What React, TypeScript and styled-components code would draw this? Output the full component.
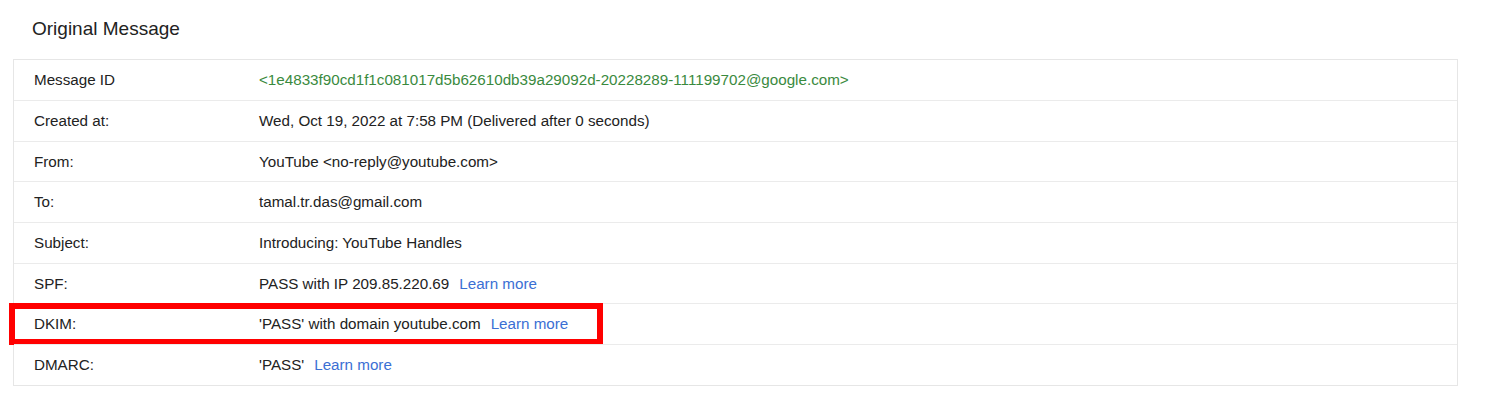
import React from "react";
import styled, { createGlobalStyle } from "styled-components";

const Global = createGlobalStyle`
  html, body { margin: 0; padding: 0; background: #fff; }
  body { font-family: Arial, "Liberation Sans", sans-serif; color: #222; }
`;

const Page = styled.div`
  width: 1500px;
  height: 412px;
  padding: 17px 0 0 13px;
  box-sizing: border-box;
`;

const Title = styled.h2`
  margin: 0 0 0 19px;
  font-size: 19px;
  font-weight: 400;
  line-height: 24px;
  color: #222;
`;

const Table = styled.div`
  margin-top: 18px;
  width: 1445px;
  border: 1px solid #e6e6e6;
  box-sizing: border-box;
`;

const Row = styled.div`
  position: relative;
  display: flex;
  align-items: center;
  height: 40.7px;
  padding-bottom: 1px;
  box-sizing: border-box;
  font-size: 15.2px;
  border-top: 1px solid #ebebeb;
  &:first-child { border-top: none; height: 40px; }
`;

const Label = styled.div`
  width: 225px;
  padding-left: 20px;
  flex: none;
`;

const Value = styled.div<{ $tone?: "green" }>`
  color: ${(p) => (p.$tone === "green" ? "#3a8a3e" : "#222")};
  white-space: pre;
`;

const Link = styled.a`
  color: #3b6fd4;
  text-decoration: none;
  margin-left: 10px;
  cursor: pointer;
`;

const Highlight = styled.div`
  position: absolute;
  left: -5px;
  top: -1px;
  width: 594px;
  height: 42px;
  border: 6.5px solid #ff0000;
  box-sizing: border-box;
  pointer-events: none;
`;

type Item = { label: string; value: string; link?: boolean; green?: boolean; mark?: boolean };

const items: Item[] = [
  { label: "Message ID", value: "<1e4833f90cd1f1c081017d5b62610db39a29092d-20228289-111199702@google.com>", green: true },
  { label: "Created at:", value: "Wed, Oct 19, 2022 at 7:58 PM (Delivered after 0 seconds)" },
  { label: "From:", value: "YouTube <no-reply@youtube.com>" },
  { label: "To:", value: "tamal.tr.das@gmail.com" },
  { label: "Subject:", value: "Introducing: YouTube Handles" },
  { label: "SPF:", value: "PASS with IP 209.85.220.69", link: true },
  { label: "DKIM:", value: "'PASS' with domain youtube.com", link: true, mark: true },
  { label: "DMARC:", value: "'PASS'", link: true },
];

export default function App() {
  return (
    <>
      <Global />
      <Page>
        <Title>Original Message</Title>
        <Table>
          {items.map((it) => (
            <Row key={it.label}>
              <Label>{it.label}</Label>
              <Value $tone={it.green ? "green" : undefined}>
                {it.value}
                {it.link && <Link>Learn more</Link>}
              </Value>
              {it.mark && <Highlight />}
            </Row>
          ))}
        </Table>
      </Page>
    </>
  );
}
